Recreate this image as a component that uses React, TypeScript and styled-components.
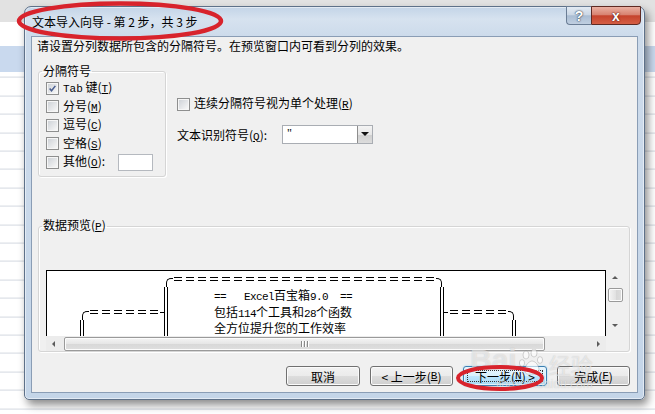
import React from 'react'
import styled, { createGlobalStyle, css } from 'styled-components'

const GlobalStyle = createGlobalStyle`
  html, body {
    margin: 0;
    padding: 0;
    background: #fff;
  }
  body {
    font-family: "Noto Sans CJK SC", "Liberation Sans", sans-serif;
    font-size: 12px;
    color: #000;
  }
`

// excel sheet behind the dialog
const Desktop = styled.div`
  position: relative;
  width: 655px;
  height: 414px;
  overflow: hidden;
  box-sizing: border-box;
  padding: 6px 0 0 24px;
  background-color: #fff;
  background-image:
    linear-gradient(to bottom, #e2e2e2 0 22px, #ffffff 22px 46px, #c9d9ee 46px 72px, transparent 72px),
    repeating-linear-gradient(to bottom, transparent 0 17.4px, #d3d8e0 17.4px 18.4px);
  background-position: 0 0, 0 59.6px;
`

const Window = styled.div`
  width: 621px;
  height: 394px;
  box-sizing: border-box;
  display: flex;
  flex-direction: column;
  padding: 0 6px 6px;
  border: 1px solid #5e7189;
  border-radius: 7px 7px 5px 5px;
  background: linear-gradient(to bottom, #c3d4e7 0, #d6e2ef 12px, #cddbeb 29px, #c4d5e8 100%);
  box-shadow: inset 0 0 0 1px rgba(255, 255, 255, 0.5), 3px 5px 9px rgba(0, 0, 0, 0.45);
`

const TitleBar = styled.div`
  height: 29px;
  display: flex;
  align-items: flex-start;
`

const TitleText = styled.div`
  padding: 7px 0 0 1px;
  line-height: 16px;
  font-size: 12px;
  white-space: nowrap;
`

const CaptionButtons = styled.div`
  margin: -1px -3px 0 auto;
  display: flex;
`

const CaptionButton = styled.div<{ $variant: 'help' | 'close' }>`
  height: 19px;
  box-sizing: border-box;
  display: flex;
  align-items: center;
  justify-content: center;
  color: #fff;
  font-family: "Liberation Sans", sans-serif;
  font-weight: bold;
  font-size: 14px;
  text-shadow: 0 0 2px #2b3a4d, 0 0 1px #2b3a4d;

  ${(p) =>
    p.$variant === 'help'
      ? css`
          width: 25px;
          border: 1px solid #6a7d95;
          border-right: none;
          border-radius: 0 0 0 4px;
          background: linear-gradient(to bottom, #e3eaf3 0, #cbd7e5 45%, #aabdd3 52%, #c0cfe1 100%);
        `
      : css`
          width: 50px;
          border: 1px solid #5e2a23;
          border-radius: 0 0 4px 0;
          background: linear-gradient(to bottom, #eab0a2 0, #d88371 45%, #c5432c 52%, #d55f45 100%);
          text-shadow: 0 0 2px #5a1a10, 0 0 1px #5a1a10;
        `}
`

const Client = styled.div`
  flex: 1;
  display: flex;
  flex-direction: column;
  box-sizing: border-box;
  padding: 0 6px 0 6px;
  background: #f0f0f0;
  border: 1px solid #8a9db5;
`

const Instruction = styled.div`
  margin: 1px 0 0 -1px;
  line-height: 16px;
  white-space: nowrap;
`

const TopSection = styled.div`
  display: flex;
  align-items: flex-start;
  margin-top: 10px;
`

const Group = styled.fieldset<{ $w: number; $h: number; $pt: number }>`
  margin: 0;
  width: ${(p) => p.$w}px;
  height: ${(p) => p.$h}px;
  min-width: 0;
  box-sizing: border-box;
  padding: ${(p) => p.$pt}px 6px 0 7px;
  border: 1px solid #d5d5d5;
  border-radius: 3px;
  box-shadow: inset 1px 1px 0 #fff, 1px 1px 0 #fff;
`

const Legend = styled.legend`
  margin-left: -4px;
  padding: 0 1px;
  line-height: 14px;
  font-size: 12px;
`

const CheckRow = styled.label<{ $h?: number }>`
  display: flex;
  align-items: center;
  gap: 4px;
  height: ${(p) => p.$h ?? 18.5}px;
  white-space: nowrap;
  line-height: 14px;
`

const Box = styled.span`
  flex: none;
  width: 13px;
  height: 13px;
  box-sizing: border-box;
  display: flex;
  align-items: center;
  justify-content: center;
  border: 1px solid #8e8f8f;
  padding: 1px;
  background: linear-gradient(135deg, #cfd3d8, #f7f7f7) content-box, #f6f6f6;
`

const Mono = styled.span`
  font-family: "Liberation Mono", monospace;
  font-size: 11px;
`

const Key = styled.span`
  font-family: "Liberation Mono", monospace;
  font-size: 11px;
  text-decoration: underline;
`

const SmallInput = styled.span`
  margin-left: 9px;
  width: 35px;
  height: 17px;
  box-sizing: border-box;
  background: #fff;
  border: 1px solid #b5b9bf;
`

const RightColumn = styled.div`
  margin-left: 11px;
  padding-top: 31px;
  display: flex;
  flex-direction: column;
`

const QualifierRow = styled.div`
  display: flex;
  align-items: center;
  height: 19px;
  margin-top: 11.5px;
`

const QualifierLabel = styled.span`
  width: 105px;
  white-space: nowrap;
`

const Select = styled.div`
  width: 91px;
  height: 19px;
  box-sizing: border-box;
  display: flex;
  align-items: stretch;
  background: #fff;
  border: 1px solid #a9adb3;
`

const SelectValue = styled.span`
  flex: 1;
  padding-left: 4px;
  line-height: 15px;
  font-family: "Liberation Serif", serif;
  font-size: 12px;
`

const DropButton = styled.span`
  width: 15px;
  display: flex;
  align-items: center;
  justify-content: center;
  box-sizing: border-box;
  border-left: 1px solid #8d8d8d;
  background: linear-gradient(to bottom, #f4f4f4 0, #e6e6e6 50%, #cfcfcf 51%, #dcdcdc 100%);
`

const Arrow = styled.span<{ $dir: 'up' | 'down' | 'left' | 'right'; $size?: number; $color?: string }>`
  width: 0;
  height: 0;
  border: ${(p) => p.$size ?? 3}px solid transparent;
  ${(p) => {
    const s = p.$size ?? 3
    const c = p.$color ?? '#5b5b5b'
    switch (p.$dir) {
      case 'up':
        return css`border-bottom-color: ${c}; border-top-width: 0; border-bottom-width: ${s}px;`
      case 'down':
        return css`border-top-color: ${c}; border-bottom-width: 0; border-top-width: ${s}px;`
      case 'left':
        return css`border-right-color: ${c}; border-left-width: 0; border-right-width: ${s}px;`
      default:
        return css`border-left-color: ${c}; border-right-width: 0; border-left-width: ${s}px;`
    }
  }}
`

const PreviewSection = styled.div`
  margin-top: 41px;
`

const PreviewFrame = styled.div`
  display: grid;
  grid-template-columns: 560px 17px;
  grid-template-rows: 66px 15px;
`

const TextArea = styled.div`
  background: #fff;
  border: 1px solid #000;
  border-bottom: none;
  box-sizing: border-box;
  overflow: hidden;
  padding-left: 5px;
`

const Line = styled.div`
  display: flex;
  align-items: baseline;
  height: 16.3px;
  white-space: pre;
`

const Cell = styled.span<{ $wide: boolean }>`
  flex: none;
  display: inline-block;
  text-align: center;
  line-height: 16.3px;
  width: ${(p) => (p.$wide ? 12 : 6)}px;
  ${(p) =>
    p.$wide
      ? css`font-family: "Noto Sans CJK SC", sans-serif; font-size: 12px;`
      : css`font-family: "Liberation Mono", monospace; font-size: 11px;`}
`

const ink = '#000'
const doubleV = css`
  background: linear-gradient(
    to right,
    transparent 4px,
    ${ink} 4px 5px,
    transparent 5px 7px,
    ${ink} 7px 8px,
    transparent 8px
  );
`

// box-drawing characters of the text preview, drawn as 12px cells
const BoxGlyph = styled.span<{ $g: string }>`
  flex: none;
  align-self: flex-start;
  position: relative;
  width: 12px;
  height: 16.3px;

  ${(p) => {
    switch (p.$g) {
      case '║':
        return doubleV
      case '═':
        return css`
          background: linear-gradient(to bottom, transparent 6px, ${ink} 6px 7px, transparent 7px 9px, ${ink} 9px 10px, transparent 10px)
            2px 0 / 8px 100% no-repeat;
        `
      case '╭':
        return css`
          &::before {
            content: '';
            position: absolute;
            left: 6px;
            top: 7px;
            width: 6px;
            bottom: 0;
            border-top: 1px solid ${ink};
            border-left: 1px solid ${ink};
            border-top-left-radius: 5px;
          }
        `
      case '╮':
        return css`
          &::before {
            content: '';
            position: absolute;
            left: 0;
            top: 7px;
            width: 5px;
            bottom: 0;
            border-top: 1px solid ${ink};
            border-right: 1px solid ${ink};
            border-top-right-radius: 5px;
          }
        `
      case '╢':
        return css`
          ${doubleV}
          &::before {
            content: '';
            position: absolute;
            left: 0;
            width: 4px;
            top: 8px;
            height: 1px;
            background: ${ink};
          }
        `
      case '╟':
        return css`
          ${doubleV}
          &::before {
            content: '';
            position: absolute;
            left: 8px;
            width: 4px;
            top: 8px;
            height: 1px;
            background: ${ink};
          }
        `
      default:
        return ''
    }
  }}
`

const VScroll = styled.div`
  display: flex;
  flex-direction: column;
  align-items: center;
  padding: 0 0 3px 1px;
`

const ScrollArrow = styled.div`
  flex: none;
  width: 15px;
  height: 15px;
  display: flex;
  align-items: center;
  justify-content: center;
`

const VThumb = styled.div`
  margin-top: 3px;
  width: 15px;
  height: 14px;
  box-sizing: border-box;
  border: 1px solid #9a9a9a;
  border-radius: 2px;
  background: linear-gradient(to right, #f4f4f4, #e2e2e2 50%, #d6d6d6 51%, #dedede);
  box-shadow: inset 0 0 0 1px #fcfcfc;
`

const Spacer = styled.div`
  flex: 1;
`

const HScroll = styled.div`
  display: flex;
  align-items: center;
  background: #ececec;
`

const HThumb = styled.div`
  margin-left: 3px;
  width: 481px;
  height: 14px;
  box-sizing: border-box;
  display: flex;
  align-items: center;
  justify-content: center;
  border: 1px solid #9a9a9a;
  border-radius: 2px;
  background: linear-gradient(to bottom, #f4f4f4, #e6e6e6 50%, #d8d8d8 51%, #dfdfdf);
  box-shadow: inset 0 0 0 1px #fcfcfc;
`

const Grip = styled.span`
  width: 1px;
  height: 6px;
  background: #8a8a8a;
  box-shadow: 1px 0 0 #fff;
  margin: 0 1px;
`

const Corner = styled.div`
  background: #f0f0f0;
`

const ButtonRow = styled.div`
  display: flex;
  justify-content: flex-end;
  gap: 10px;
  margin-top: 14px;
  padding-right: 1px;
`

const Button = styled.div<{ $w: number; $default?: boolean }>`
  position: relative;
  width: ${(p) => p.$w}px;
  height: 20px;
  box-sizing: border-box;
  display: flex;
  align-items: center;
  justify-content: center;
  white-space: pre;
  border-radius: 3px;
  font-size: 12px;
  border: 1px solid #707070;
  background: linear-gradient(to bottom, #f2f2f2 0, #ebebeb 50%, #dddddd 51%, #cfcfcf 100%);
  box-shadow: inset 0 0 0 1px #fbfbfb;

  ${(p) =>
    p.$default &&
    css`
      border-color: #3c7fb1;
      background: linear-gradient(to bottom, #eaf6fd 0, #d9f0fc 50%, #bee6fd 51%, #a7d9f5 100%);
      box-shadow: inset 0 0 0 1px #e6f4fc, 0 0 2px #9ed2f0;
      &::after {
        content: '';
        position: absolute;
        inset: 3px;
        border: 1px dotted #333;
      }
    `}
`

const Annotation = styled.svg`
  position: absolute;
  left: 0;
  top: 0;
  pointer-events: none;
`

const Watermark = styled.div`
  position: absolute;
  left: 470px;
  top: 343px;
  display: flex;
  flex-direction: column;
  align-items: flex-start;
  color: rgba(255, 255, 255, 0.55);
  text-shadow: 0 0 1px rgba(90, 90, 90, 0.3);
  pointer-events: none;
`

const WatermarkTop = styled.div`
  display: flex;
  align-items: flex-end;
  gap: 2px;
`

const WatermarkBrand = styled.span`
  font-family: "Liberation Sans", sans-serif;
  font-weight: bold;
  font-size: 30px;
  line-height: 34px;
`

const WatermarkCn = styled.span`
  font-size: 22px;
  line-height: 26px;
  margin-left: 2px;
`

const WatermarkUrl = styled.span`
  margin-left: 26px;
  font-family: "Liberation Sans", sans-serif;
  font-size: 12px;
  line-height: 14px;
`

const previewLines = [
  ' '.repeat(18) + '╭' + '═'.repeat(22) + '╮',
  ' '.repeat(18) + '║' + ' '.repeat(7) + '==   Excel百宝箱9.0  ==' + ' '.repeat(14) + '║',
  ' '.repeat(4) + '╭' + '═'.repeat(6) + '╢' + ' '.repeat(7) + '包括114个工具和28个函数' + ' '.repeat(14) + '╟' + '═'.repeat(5) + '╮',
  ' '.repeat(4) + '║' + ' '.repeat(12) + '║' + ' '.repeat(7) + '全方位提升您的工作效率' + ' '.repeat(15) + '║' + ' '.repeat(10) + '║',
]

const isBox = (c: string) => c >= '\u2500' && c <= '\u257f'
const isWide = (c: string) => /[\u3000-\u9fff\uff00-\uffef]/.test(c)

const PreviewLine: React.FC<{ text: string }> = ({ text }) => (
  <Line>
    {Array.from(text).map((c, i) =>
      isBox(c) ? (
        <BoxGlyph key={i} $g={c} />
      ) : (
        <Cell key={i} $wide={isWide(c)}>
          {c === ' ' ? '\u00a0' : c}
        </Cell>
      ),
    )}
  </Line>
)

const Check: React.FC<{ checked?: boolean }> = ({ checked }) => (
  <Box>
    {checked && (
      <svg width="11" height="11" viewBox="0 0 11 11">
        <path d="M2 5.6 L4.3 8.2 L9 2.3" fill="none" stroke="#4a5e8f" strokeWidth="1.9" />
      </svg>
    )}
  </Box>
)

const Paw: React.FC = () => (
  <svg width="26" height="28" viewBox="0 0 26 28" fill="rgba(255,255,255,0.6)" stroke="rgba(90,90,90,0.25)">
    <ellipse cx="7" cy="6" rx="3" ry="4" />
    <ellipse cx="15" cy="4" rx="3" ry="4" />
    <ellipse cx="3" cy="14" rx="2.6" ry="3.4" />
    <ellipse cx="21" cy="11" rx="2.6" ry="3.4" />
    <path d="M6 22 C6 15 11 12 13 12 C16 12 20 16 20 21 C20 26 15 25 13 25 C10 25 6 26 6 22 Z" />
  </svg>
)

const App: React.FC = () => {
  return (
    <Desktop>
      <GlobalStyle />
      <Window>
        <TitleBar>
          <TitleText>文本导入向导 - 第 2 步，共 3 步</TitleText>
          <CaptionButtons>
            <CaptionButton $variant="help">?</CaptionButton>
            <CaptionButton $variant="close">x</CaptionButton>
          </CaptionButtons>
        </TitleBar>

        <Client>
          <Instruction>请设置分列数据所包含的分隔符号。在预览窗口内可看到分列的效果。</Instruction>

          <TopSection>
            <Group $w={128} $h={113} $pt={1}>
              <Legend>分隔符号</Legend>
              <CheckRow>
                <Check checked />
                <span>
                  <Mono>Tab</Mono> 键(<Key>T</Key>)
                </span>
              </CheckRow>
              <CheckRow>
                <Check />
                <span>
                  分号(<Key>M</Key>)
                </span>
              </CheckRow>
              <CheckRow>
                <Check />
                <span>
                  逗号(<Key>C</Key>)
                </span>
              </CheckRow>
              <CheckRow>
                <Check />
                <span>
                  空格(<Key>S</Key>)
                </span>
              </CheckRow>
              <CheckRow>
                <Check />
                <span>
                  其他(<Key>O</Key>):
                </span>
                <SmallInput />
              </CheckRow>
            </Group>

            <RightColumn>
              <CheckRow $h={18}>
                <Check />
                <span>
                  连续分隔符号视为单个处理(<Key>R</Key>)
                </span>
              </CheckRow>
              <QualifierRow>
                <QualifierLabel>
                  文本识别符号(<Key>Q</Key>):
                </QualifierLabel>
                <Select>
                  <SelectValue>"</SelectValue>
                  <DropButton>
                    <Arrow $dir="down" $size={4} $color="#111" />
                  </DropButton>
                </Select>
              </QualifierRow>
            </RightColumn>
          </TopSection>

          <PreviewSection>
            <Group $w={592} $h={134} $pt={36}>
              <Legend>
                数据预览(<Key>P</Key>)
              </Legend>
              <PreviewFrame>
                <TextArea>
                  {previewLines.map((l, i) => (
                    <PreviewLine key={i} text={l} />
                  ))}
                </TextArea>
                <VScroll>
                  <ScrollArrow>
                    <Arrow $dir="up" />
                  </ScrollArrow>
                  <VThumb />
                  <Spacer />
                  <ScrollArrow>
                    <Arrow $dir="down" />
                  </ScrollArrow>
                </VScroll>
                <HScroll>
                  <ScrollArrow>
                    <Arrow $dir="left" />
                  </ScrollArrow>
                  <HThumb>
                    <Grip />
                    <Grip />
                    <Grip />
                  </HThumb>
                  <Spacer />
                  <ScrollArrow>
                    <Arrow $dir="right" />
                  </ScrollArrow>
                </HScroll>
                <Corner />
              </PreviewFrame>
            </Group>
          </PreviewSection>

          <ButtonRow>
            <Button $w={74}>取消</Button>
            <Button $w={83}>
              {'< 上一步('}
              <Key>B</Key>)
            </Button>
            <Button $w={84} $default>
              下一步(<Key>N</Key>
              {') >'}
            </Button>
            <Button $w={73}>
              完成(<Key>F</Key>)
            </Button>
          </ButtonRow>
        </Client>
      </Window>

      <Watermark>
        <WatermarkTop>
          <WatermarkBrand>Bai</WatermarkBrand>
          <Paw />
          <WatermarkCn>经验</WatermarkCn>
        </WatermarkTop>
        <WatermarkUrl>jingyan.baidu.com</WatermarkUrl>
      </Watermark>

      <Annotation width="655" height="414" viewBox="0 0 655 414">
        <ellipse cx="120" cy="21" rx="101" ry="17.5" fill="none" stroke="#d8232c" strokeWidth="4.5" />
        <ellipse cx="500" cy="378" rx="42" ry="11" fill="none" stroke="#d8232c" strokeWidth="4" />
      </Annotation>
    </Desktop>
  )
}

export default App
